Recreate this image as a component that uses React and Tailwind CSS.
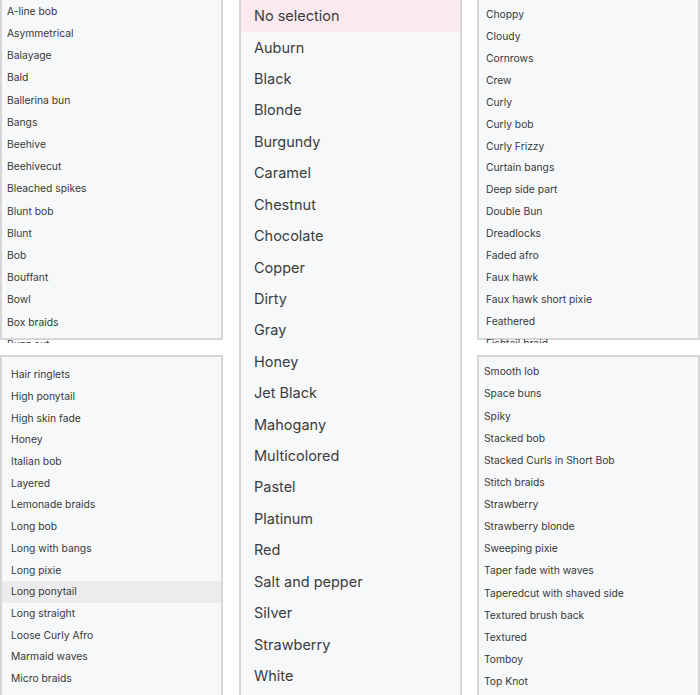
import React from "react";

const leftTop = ["A-line bob","Asymmetrical","Balayage","Bald","Ballerina bun","Bangs","Beehive","Beehivecut","Bleached spikes","Blunt bob","Blunt","Bob","Bouffant","Bowl","Box braids","Buzz cut"];
const leftBottom = ["Frohawk","Hair ringlets","High ponytail","High skin fade","Honey","Italian bob","Layered","Lemonade braids","Long bob","Long with bangs","Long pixie","Long ponytail","Long straight","Loose Curly Afro","Marmaid waves","Micro braids","Mohawk"];
const colors = ["No selection","Auburn","Black","Blonde","Burgundy","Caramel","Chestnut","Chocolate","Copper","Dirty","Gray","Honey","Jet Black","Mahogany","Multicolored","Pastel","Platinum","Red","Salt and pepper","Silver","Strawberry","White","Yellow"];
const rightTop = ["Choppy","Cloudy","Cornrows","Crew","Curly","Curly bob","Curly Frizzy","Curtain bangs","Deep side part","Double Bun","Dreadlocks","Faded afro","Faux hawk","Faux hawk short pixie","Feathered","Fishtail braid"];
const rightBottom = ["Smooth lob","Space buns","Spiky","Stacked bob","Stacked Curls in Short Bob","Stitch braids","Strawberry","Strawberry blonde","Sweeping pixie","Taper fade with waves","Taperedcut with shaved side","Textured brush back","Textured","Tomboy","Top Knot","Twists"];

export default function App() {
  return (
    <div
      className="flex w-[700px] h-[695px] overflow-hidden bg-white text-[#383838]"
      style={{ fontFamily: "Inter, 'Noto Sans', sans-serif" }}
    >
      {/* Left column */}
      <div className="w-[223px] shrink-0 flex flex-col">
        <div className="h-[343px] shrink-0 overflow-hidden">
          <div className="h-[340px] border-x-2 border-b-2 border-[#d6d6d6] bg-[#f6f8fa]">
            <ul className="pt-[0.5px] pl-[5px] text-[10.3px]">
              {leftTop.map((t) => (
                <li key={t} className="h-[22.2px] flex items-center whitespace-nowrap">{t}</li>
              ))}
            </ul>
          </div>
        </div>
        <div className="mt-[12px] h-[400px] shrink-0 border-2 border-[#d6d6d6] bg-[#f6f8fa] overflow-hidden">
          <ul className="mt-[-14.5px] text-[10.3px]">
            {leftBottom.map((t) => (
              <li
                key={t}
                className={`h-[21.7px] flex items-center pl-[9px] whitespace-nowrap ${t === "Long ponytail" ? "bg-[#ececee]" : ""}`}
              >
                {t}
              </li>
            ))}
          </ul>
        </div>
      </div>

      {/* Middle column */}
      <div className="ml-[16px] w-[223px] shrink-0 h-[720px] border-x-2 border-[#d6d6d6] bg-[#f6f8fa] overflow-hidden">
        <ul className="pt-[0.3px] text-[14.5px] text-[#3c3c3c]">
          {colors.map((t) => (
            <li
              key={t}
              className={`h-[31.43px] flex items-center pl-[13px] whitespace-nowrap ${t === "No selection" ? "bg-[#fbe9ed]" : ""}`}
            >
              {t}
            </li>
          ))}
        </ul>
      </div>

      {/* Right column */}
      <div className="ml-[15px] w-[223px] shrink-0 flex flex-col">
        <div className="h-[343px] shrink-0 overflow-hidden">
          <div className="h-[340px] border-x-2 border-b-2 border-[#d6d6d6] bg-[#f6f8fa]">
            <ul className="pt-[4px] pl-[7px] text-[10.3px]">
              {rightTop.map((t) => (
                <li key={t} className="h-[21.9px] flex items-center whitespace-nowrap">{t}</li>
              ))}
            </ul>
          </div>
        </div>
        <div className="mt-[12px] h-[400px] shrink-0 border-2 border-[#d6d6d6] bg-[#f6f8fa] overflow-hidden">
          <ul className="pt-[4px] pl-[5px] text-[10.3px]">
            {rightBottom.map((t) => (
              <li key={t} className="h-[22.14px] flex items-center whitespace-nowrap">{t}</li>
            ))}
          </ul>
        </div>
      </div>
    </div>
  );
}
